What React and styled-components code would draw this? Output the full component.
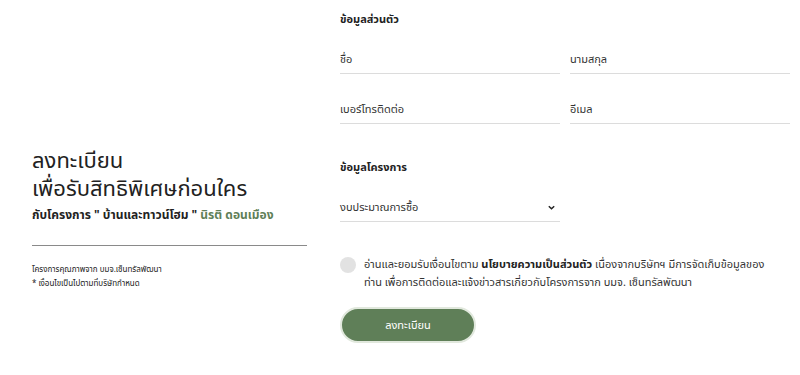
import React from "react";
import styled, { createGlobalStyle } from "styled-components";

const GlobalStyle = createGlobalStyle`
  body {
    margin: 0;
    background: #ffffff;
    font-family: "Noto Sans Thai", "Noto Sans", "DejaVu Sans", sans-serif;
    color: #222222;
  }
`;

const Page = styled.div`
  width: 800px;
  height: 375px;
  display: flex;
  box-sizing: border-box;
  padding: 0 10px 0 32px;
`;

const Intro = styled.div`
  width: 275px;
  display: flex;
  flex-direction: column;
  padding-top: 148px;
`;

const Title = styled.h1`
  margin: 0;
  font-size: 22px;
  font-weight: 400;
  line-height: 28px;
  color: #222222;
`;

const Project = styled.p`
  margin: 3px 0 0;
  font-size: 12px;
  line-height: 17px;
  font-weight: 700;
  color: #222222;
`;

const Accent = styled.span`
  color: #5f7f58;
`;

const Divider = styled.hr`
  margin: 21px 0 17px;
  border: none;
  border-top: 1px solid #8a8a8a;
`;

const Note = styled.p`
  margin: 0;
  font-size: 8px;
  line-height: 14px;
  color: #222222;
`;

const Form = styled.form`
  margin-left: 33px;
  flex: 1;
  display: flex;
  flex-direction: column;
  padding-top: 12px;
`;

const Section = styled.h2`
  margin: ${(p) => p.$gap || "0"} 0 0;
  font-size: 11px;
  font-weight: 700;
  line-height: 16px;
  color: #222222;
`;

const Grid = styled.div`
  display: grid;
  grid-template-columns: 220px 220px;
  column-gap: 10px;
  row-gap: 26px;
  margin-top: 22px;
`;

const Field = styled.div`
  height: 24px;
  display: flex;
  align-items: center;
  justify-content: space-between;
  border-bottom: 1px solid #dcdcdc;
  font-size: 11px;
  color: #333333;
  box-sizing: border-box;
  padding-bottom: 4px;
`;

const Select = styled(Field)`
  width: 220px;
  margin-top: 22px;
`;

const Chevron = styled.svg`
  width: 9px;
  height: 9px;
  margin-right: 4px;
`;

const Agreement = styled.div`
  display: flex;
  align-items: flex-start;
  gap: 8px;
  margin-top: 34px;
  max-width: 440px;
  font-size: 11px;
  line-height: 18px;
  color: #333333;
`;

const Radio = styled.span`
  flex: none;
  width: 16px;
  height: 16px;
  border-radius: 50%;
  background: #e2e2e2;
  margin-top: 1px;
`;

const Strong = styled.b`
  font-weight: 700;
  color: #222222;
`;

const Submit = styled.button`
  margin-top: 15px;
  width: 136px;
  height: 36px;
  border-radius: 18px;
  background: #5f7f58;
  border: 2px solid #e1e8dd;
  color: #ffffff;
  font-family: inherit;
  font-size: 11px;
`;

export default function App() {
  return (
    <>
      <GlobalStyle />
      <Page>
        <Intro>
          <Title>ลงทะเบียน</Title>
          <Title>เพื่อรับสิทธิพิเศษก่อนใคร</Title>
          <Project>
            กับโครงการ " บ้านและทาวน์โฮม " <Accent>นิรติ ดอนเมือง</Accent>
          </Project>
          <Divider />
          <Note>โครงการคุณภาพจาก บมจ.เซ็นทรัลพัฒนา</Note>
          <Note>* เงื่อนไขเป็นไปตามที่บริษัทกำหนด</Note>
        </Intro>
        <Form>
          <Section>ข้อมูลส่วนตัว</Section>
          <Grid>
            <Field>ชื่อ</Field>
            <Field>นามสกุล</Field>
            <Field>เบอร์โทรติดต่อ</Field>
            <Field>อีเมล</Field>
          </Grid>
          <Section $gap="36px">ข้อมูลโครงการ</Section>
          <Select>
            งบประมาณการซื้อ
            <Chevron viewBox="0 0 10 10">
              <path d="M2 3.5 L5 6.5 L8 3.5" fill="none" stroke="#222" strokeWidth="1.6" />
            </Chevron>
          </Select>
          <Agreement>
            <Radio />
            <span>
              อ่านและยอมรับเงื่อนไขตาม <Strong>นโยบายความเป็นส่วนตัว</Strong> เนื่องจากบริษัทฯ มีการจัดเก็บข้อมูลของท่าน เพื่อการติดต่อและแจ้งข่าวสารเกี่ยวกับโครงการจาก บมจ. เซ็นทรัลพัฒนา
            </span>
          </Agreement>
          <Submit type="button">ลงทะเบียน</Submit>
        </Form>
      </Page>
    </>
  );
}
